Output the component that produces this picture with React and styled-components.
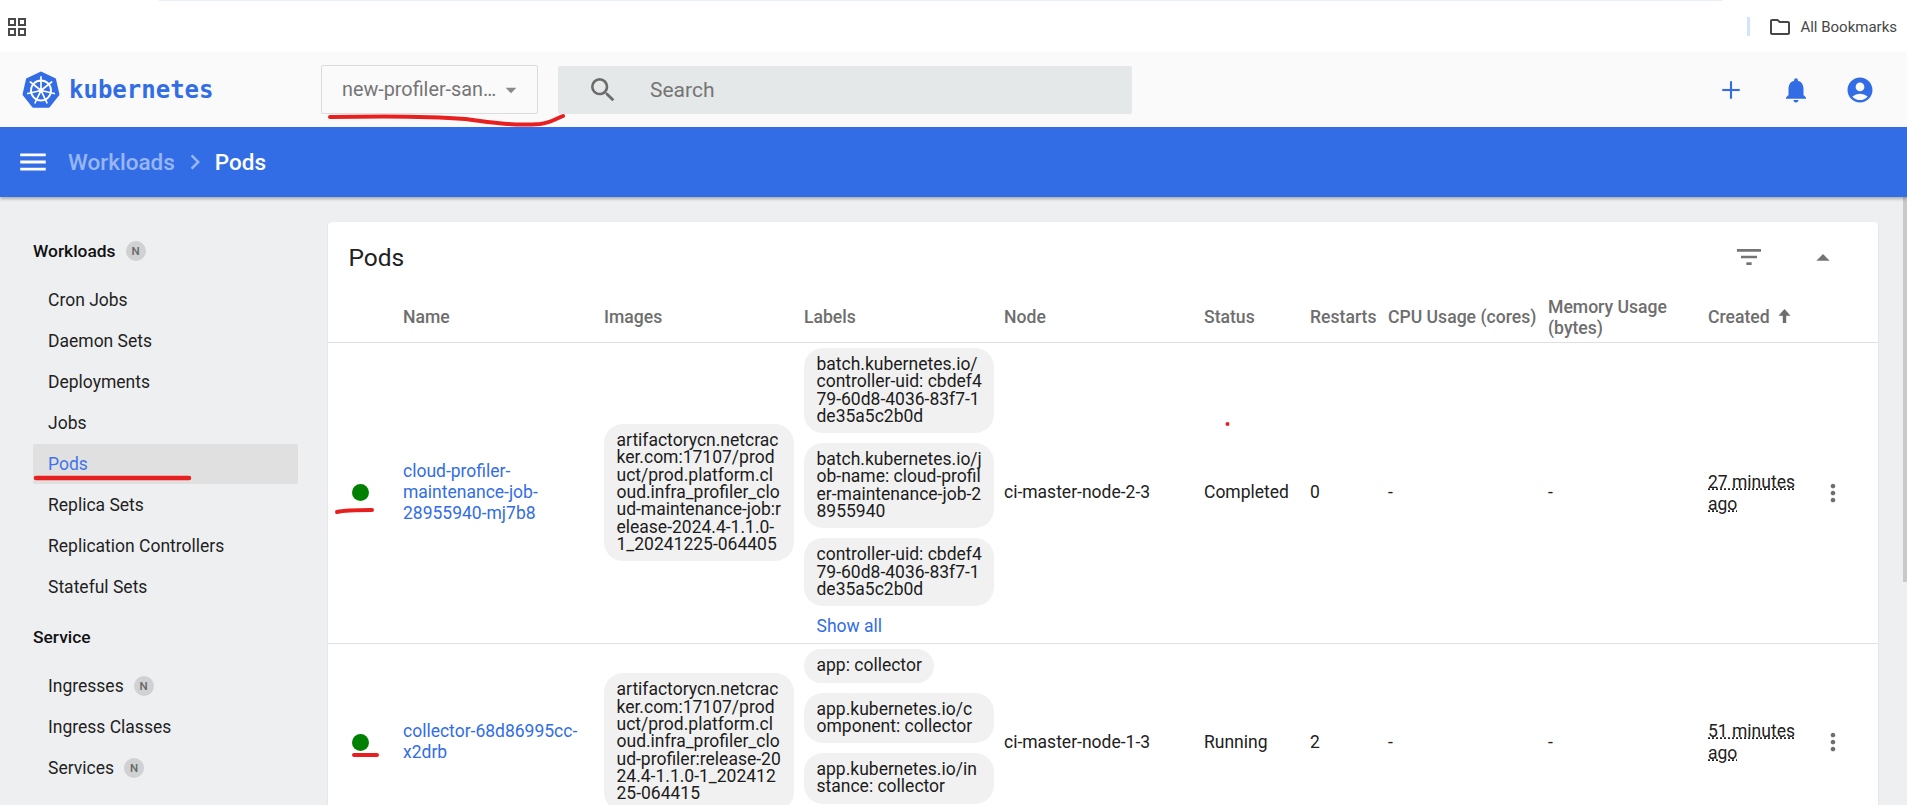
import React from 'react';
import styled, { createGlobalStyle } from 'styled-components';
import { Plus } from 'lucide-react';
import {
  MdNotifications, MdAccountCircle, MdSearch, MdMenu, MdFilterList,
  MdMoreVert, MdArrowDropDown, MdArrowDropUp, MdChevronRight, MdOutlineFolder,
} from 'react-icons/md';

const BLUE = '#326de6';

const Global = createGlobalStyle`
  html, body { margin: 0; padding: 0; height: 100%; overflow: hidden; background: #eeeff1; }
  * { box-sizing: border-box; }
  body { font-family: Roboto, "Liberation Sans", sans-serif; }
`;

const Page = styled.div`
  position: relative;
  width: 1907px;
  height: 805px;
  overflow: hidden;
  display: flex;
  flex-direction: column;
  background: #eeeff1;
`;

const BookmarkBar = styled.div`
  height: 52px;
  flex: none;
  background: #fff;
  display: flex;
  flex-direction: column;
`;
const TopLine = styled.div`
  height: 1px;
  margin-left: 159px;
  width: 1564px;
  background: #e8effb;
`;
const BookmarkRow = styled.div`
  flex: 1;
  display: flex;
  align-items: center;
  padding: 0 10px 0 8px;
  color: #444746;
`;
const AppsIcon = styled.svg`
  width: 18px;
  height: 18px;
  display: block;
`;
const Spacer = styled.div`
  flex: 1;
`;
const BarDivider = styled.div`
  width: 3px;
  height: 19px;
  background: #d3e3fd;
  margin-right: 18px;
`;
const FolderGlyph = styled(MdOutlineFolder)`
  width: 24px;
  height: 24px;
  color: #444746;
  margin-right: 8px;
`;
const BookmarkText = styled.span`
  font-size: 15px;
  color: #444746;
`;

const Toolbar = styled.header`
  height: 75px;
  flex: none;
  background: #fafafa;
  display: flex;
  align-items: center;
  padding-left: 22px;
  padding-right: 32px;
`;
const LogoMark = styled.svg`
  width: 38px;
  height: 38px;
  flex: none;
  display: block;
`;
const Wordmark = styled.span`
  font-family: "DejaVu Sans Mono", monospace;
  font-weight: 700;
  font-size: 24px;
  color: ${BLUE};
  margin-left: 9px;
  width: 252px;
`;
const NsSelect = styled.div`
  width: 217px;
  height: 49px;
  flex: none;
  border: 1px solid #dcdcdc;
  border-radius: 2px;
  display: flex;
  align-items: center;
  padding-left: 20px;
  color: #757575;
  font-size: 19.8px;
`;
const NsText = styled.span`
  width: 156px;
  white-space: nowrap;
`;
const NsCaret = styled(MdArrowDropDown)`
  width: 26px;
  height: 26px;
  color: #8a8a8a;
`;
const SearchBox = styled.div`
  width: 574px;
  height: 48px;
  flex: none;
  margin-left: 20px;
  background: #e5e8e9;
  display: flex;
  align-items: center;
  border-radius: 2px;
  padding-left: 29px;
  color: #757575;
  font-size: 21px;
`;
const SearchGlyph = styled(MdSearch)`
  width: 32px;
  height: 32px;
  color: #6b6b6b;
  margin-right: 31px;
`;
const ToolIcons = styled.div`
  display: flex;
  align-items: center;
  gap: 34.5px;
  color: ${BLUE};
`;
const ToolIcon = styled.span`
  display: flex;
  width: 30px;
  height: 30px;
  align-items: center;
  justify-content: center;
  font-size: 30px;
`;

const ActionBar = styled.div`
  height: 70px;
  flex: none;
  background: ${BLUE};
  display: flex;
  align-items: center;
  padding-left: 16px;
  color: #fff;
  font-size: 22.5px;
  font-weight: 500;
  box-shadow: 0 2px 3px rgba(0,0,0,.28);
  position: relative;
  z-index: 1;
`;
const MenuGlyph = styled(MdMenu)`
  width: 34px;
  height: 34px;
  margin-right: 18px;
`;
const Crumb = styled.span`
  color: ${p => (p.$current ? '#fff' : 'rgba(255,255,255,.5)')};
`;
const CrumbSep = styled(MdChevronRight)`
  width: 30px;
  height: 30px;
  color: rgba(255,255,255,.5);
  margin: 0 5px;
`;

const Main = styled.div`
  flex: 1;
  min-height: 0;
  display: flex;
  position: relative;
`;
const Side = styled.nav`
  width: 328px;
  flex: none;
  padding: 33px 30px 0 33px;
`;
const SectionTitle = styled.div`
  height: 41px;
  display: flex;
  align-items: center;
  font-size: 17.4px;
  font-weight: 500;
  color: #111;
  margin-top: ${p => (p.$first ? 0 : 9)}px;
  margin-bottom: 8px;
`;
const NavItem = styled.div`
  height: ${p => (p.$active ? 40 : 41)}px;
  margin-top: ${p => (p.$active ? 1 : 0)}px;
  display: flex;
  align-items: center;
  padding-left: 15px;
  font-size: 17.5px;
  color: ${p => (p.$active ? '#3f74ea' : '#1f1f1f')};
  background: ${p => (p.$active ? '#e0e0e0' : 'transparent')};
  border-radius: 2px;
`;
const NewBadge = styled.span`
  width: 20px;
  height: 20px;
  margin-left: 10px;
  border-radius: 50%;
  background: #d0d1d3;
  color: #666;
  font-size: 11.5px;
  font-weight: 500;
  display: flex;
  align-items: center;
  justify-content: center;
`;

const Content = styled.main`
  flex: none;
  width: 1550px;
  padding-top: 25px;
`;
const Card = styled.section`
  background: #fff;
  border-radius: 4px 4px 0 0;
  box-shadow: 0 1px 2px rgba(0,0,0,.12);
`;
const CardHead = styled.div`
  height: 70px;
  display: flex;
  align-items: center;
  padding: 0 39px 0 20.5px;
`;
const CardTitle = styled.h1`
  margin: 0;
  font-size: 24.5px;
  font-weight: 400;
  color: #212121;
  flex: 1;
`;
const FilterGlyph = styled(MdFilterList)`
  width: 32px;
  height: 32px;
  color: #757575;
  margin-right: 42px;
`;
const CollapseGlyph = styled(MdArrowDropUp)`
  width: 32px;
  height: 32px;
  color: #757575;
  margin-top: 1px;
`;

const COLS = '75px 201px 200px 200px 200px 106px 78px 160px 160px 113px 1fr';
const HeadRow = styled.div`
  display: grid;
  grid-template-columns: ${COLS};
  height: 51px;
  padding-top: 1px;
  align-items: center;
  border-bottom: 1px solid #e0e0e0;
  color: #6e6e6e;
  font-size: 17.6px;
  font-weight: 500;
  line-height: 21px;
`;
const SortCell = styled.div`
  display: flex;
  align-items: center;
  gap: 8px;
`;
const SortGlyph = styled.svg`
  width: 13px;
  height: 14px;
  display: block;
  fill: #6e6e6e;
  margin-top: -3px;
`;
const Row = styled.div`
  display: grid;
  grid-template-columns: ${COLS};
  align-items: center;
  padding: 5px 0 6px;
  border-bottom: 1px solid #e0e0e0;
  font-size: 17.5px;
  color: #212121;
  line-height: 21px;
`;
const StatusCell = styled.div`
  padding-left: 24px;
`;
const StatusDot = styled.span`
  display: block;
  width: 17px;
  height: 17px;
  border-radius: 50%;
  background: #008000;
`;
const NameLink = styled.a`
  color: ${BLUE};
  padding-right: 20px;
  display: block;
`;
const Chip = styled.div`
  background: #f1f1f1;
  border-radius: 19px;
  padding: 8px 12px 8px 12.5px;
  font-size: 17.5px;
  line-height: 17.3px;
  color: #1c1c1c;
  width: ${p => (p.$fit ? 'fit-content' : '190px')};
  white-space: pre;
`;
const ChipStack = styled.div`
  display: flex;
  flex-direction: column;
  gap: 10px;
`;
const ShowAll = styled.a`
  color: ${BLUE};
  padding-left: 12.5px;
  display: block;
  height: 21px;
`;
const Age = styled.div`
  line-height: 22px;
  width: 95px;
  text-decoration: underline dotted;
  text-underline-offset: 1px;
`;
const MoreGlyph = styled(MdMoreVert)`
  width: 28px;
  height: 28px;
  color: #6e6e6e;
  display: block;
  margin-left: -2px;
`;

const Thumb = styled.div`
  position: absolute;
  right: 0;
  top: 0;
  width: 4px;
  height: 385px;
  background: #c9c9c9;
`;
const Ink = styled.svg`
  position: absolute;
  left: 0;
  top: 0;
  width: 1907px;
  height: 805px;
  pointer-events: none;
  z-index: 2;
`;

function KubeLogo() {
  const cx = 19, cy = 19.5;
  const hept = Array.from({ length: 7 }, (_, i) => {
    const a = (-90 + (i * 360) / 7) * (Math.PI / 180);
    return `${cx + 17.6 * Math.cos(a)},${cy + 17.6 * Math.sin(a)}`;
  }).join(' ');
  const spokes = Array.from({ length: 7 }, (_, i) => {
    const a = (-90 + (i * 360) / 7) * (Math.PI / 180);
    return (
      <line key={i} x1={cx + 2.4 * Math.cos(a)} y1={cy + 2.4 * Math.sin(a)}
        x2={cx + 13.6 * Math.cos(a)} y2={cy + 13.6 * Math.sin(a)}
        stroke="#fff" strokeWidth="1.7" strokeLinecap="round" />
    );
  });
  return (
    <LogoMark viewBox="0 0 38 38">
      <polygon points={hept} fill={BLUE} stroke={BLUE} strokeWidth="2.6" strokeLinejoin="round" />
      <circle cx={cx} cy={cy} r="10" fill="none" stroke="#fff" strokeWidth="1.9" />
      {spokes}
      <circle cx={cx} cy={cy} r="2.4" fill="#fff" />
    </LogoMark>
  );
}

const rows = [
  {
    name: 'cloud-profiler-maintenance-job-28955940-mj7b8',
    image: 'artifactorycn.netcrac\nker.com:17107/prod\nuct/prod.platform.cl\noud.infra_profiler_clo\nud-maintenance-job:r\nelease-2024.4-1.1.0-\n1_20241225-064405',
    labels: [
      'batch.kubernetes.io/\ncontroller-uid: cbdef4\n79-60d8-4036-83f7-1\nde35a5c2b0d',
      'batch.kubernetes.io/j\nob-name: cloud-profil\ner-maintenance-job-2\n8955940',
      'controller-uid: cbdef4\n79-60d8-4036-83f7-1\nde35a5c2b0d',
    ],
    node: 'ci-master-node-2-3', status: 'Completed', restarts: '0', age: '27 minutes ago',
  },
  {
    name: 'collector-68d86995cc-x2drb',
    image: 'artifactorycn.netcrac\nker.com:17107/prod\nuct/prod.platform.cl\noud.infra_profiler_clo\nud-profiler:release-20\n24.4-1.1.0-1_202412\n25-064415',
    labels: [
      'app: collector',
      'app.kubernetes.io/c\nomponent: collector',
      'app.kubernetes.io/in\nstance: collector',
    ],
    node: 'ci-master-node-1-3', status: 'Running', restarts: '2', age: '51 minutes ago',
  },
];

const workloads = ['Cron Jobs', 'Daemon Sets', 'Deployments', 'Jobs', 'Pods', 'Replica Sets', 'Replication Controllers', 'Stateful Sets'];

export default function App() {
  return (
    <Page>
      <Global />
      <BookmarkBar>
        <TopLine />
        <BookmarkRow>
          <AppsIcon viewBox="0 0 18 18" fill="none" stroke="#4a4a4a" strokeWidth="2">
            <rect x="1" y="1" width="6" height="6" />
            <rect x="11" y="1" width="6" height="6" />
            <rect x="1" y="11" width="6" height="6" />
            <rect x="11" y="11" width="6" height="6" />
          </AppsIcon>
          <Spacer />
          <BarDivider />
          <FolderGlyph />
          <BookmarkText>All Bookmarks</BookmarkText>
        </BookmarkRow>
      </BookmarkBar>
      <Toolbar>
        <KubeLogo />
        <Wordmark>kubernetes</Wordmark>
        <NsSelect>
          <NsText>new-profiler-san…</NsText>
          <NsCaret />
        </NsSelect>
        <SearchBox>
          <SearchGlyph />
          <span>Search</span>
        </SearchBox>
        <Spacer />
        <ToolIcons>
          <ToolIcon><Plus size={30} strokeWidth={1.7} strokeLinecap="butt" /></ToolIcon>
          <ToolIcon><MdNotifications /></ToolIcon>
          <ToolIcon><MdAccountCircle /></ToolIcon>
        </ToolIcons>
      </Toolbar>
      <ActionBar>
        <MenuGlyph />
        <Crumb>Workloads</Crumb>
        <CrumbSep />
        <Crumb $current>Pods</Crumb>
      </ActionBar>
      <Main>
        <Side>
          <SectionTitle $first>Workloads<NewBadge>N</NewBadge></SectionTitle>
          {workloads.map(w => <NavItem key={w} $active={w === 'Pods'}>{w}</NavItem>)}
          <SectionTitle>Service</SectionTitle>
          <NavItem>Ingresses<NewBadge>N</NewBadge></NavItem>
          <NavItem>Ingress Classes</NavItem>
          <NavItem>Services<NewBadge>N</NewBadge></NavItem>
        </Side>
        <Content>
          <Card>
            <CardHead>
              <CardTitle>Pods</CardTitle>
              <FilterGlyph />
              <CollapseGlyph />
            </CardHead>
            <HeadRow>
              <div />
              <div>Name</div>
              <div>Images</div>
              <div>Labels</div>
              <div>Node</div>
              <div>Status</div>
              <div>Restarts</div>
              <div>CPU Usage (cores)</div>
              <div>Memory Usage<br />(bytes)</div>
              <SortCell>
                Created
                <SortGlyph viewBox="0 0 13 14"><path d="M6.5 0 L12.5 6.8 H8.2 V14 H4.8 V6.8 H0.5 Z" /></SortGlyph>
              </SortCell>
              <div />
            </HeadRow>
            {rows.map(r => (
              <Row key={r.name}>
                <StatusCell><StatusDot /></StatusCell>
                <NameLink>{r.name}</NameLink>
                <div><Chip>{r.image}</Chip></div>
                <ChipStack>
                  {r.labels.map(l => <Chip key={l} $fit={!l.includes('\n')}>{l}</Chip>)}
                  <ShowAll>Show all</ShowAll>
                </ChipStack>
                <div>{r.node}</div>
                <div>{r.status}</div>
                <div>{r.restarts}</div>
                <div>-</div>
                <div>-</div>
                <Age>{r.age}</Age>
                <MoreGlyph />
              </Row>
            ))}
          </Card>
        </Content>
        <Thumb />
      </Main>
      <Ink viewBox="0 0 1907 805" fill="none" stroke="#e81f1f" strokeLinecap="round">
        <path d="M330 117 C 380 116, 430 116, 465 119 C 490 122, 510 126, 540 124 C 550 123, 555 119, 563 116" strokeWidth="4" />
        <path d="M36 478 L189 478" strokeWidth="4.5" />
        <path d="M337 512 C 345 510, 360 510, 372 510" strokeWidth="4" />
        <path d="M354 755 L377 755" strokeWidth="4" />
        <circle cx="1227.5" cy="424" r="2" fill="#e81f1f" stroke="none" />
      </Ink>
    </Page>
  );
}
